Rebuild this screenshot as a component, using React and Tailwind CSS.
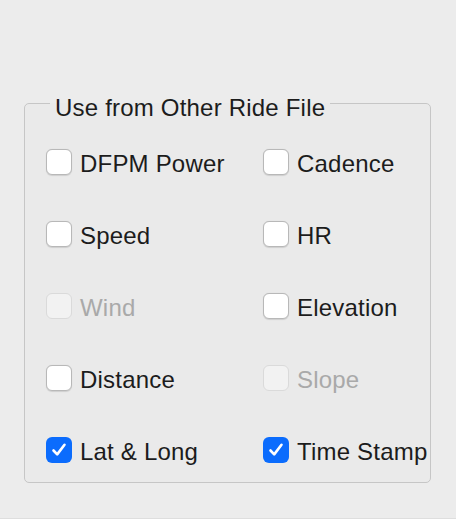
import React from "react";

const items = [
  { label: "DFPM Power", checked: false, disabled: false },
  { label: "Cadence", checked: false, disabled: false },
  { label: "Speed", checked: false, disabled: false },
  { label: "HR", checked: false, disabled: false },
  { label: "Wind", checked: false, disabled: true },
  { label: "Elevation", checked: false, disabled: false },
  { label: "Distance", checked: false, disabled: false },
  { label: "Slope", checked: false, disabled: true },
  { label: "Lat & Long", checked: true, disabled: false },
  { label: "Time Stamp", checked: true, disabled: false },
];

function CheckBox({ checked, disabled }) {
  if (checked) {
    return (
      <span className="flex h-[26px] w-[26px] shrink-0 items-center justify-center rounded-[6px] bg-[#0b6cfd]">
        <svg width="18" height="18" viewBox="0 0 18 18" fill="none">
          <path
            d="M3.5 9.5 L7.2 13.4 L14.5 3.8"
            stroke="white"
            strokeWidth="2.6"
            strokeLinecap="round"
            strokeLinejoin="round"
          />
        </svg>
      </span>
    );
  }
  if (disabled) {
    return (
      <span className="h-[26px] w-[26px] shrink-0 rounded-[6px] border border-[#dadada] bg-[#f2f2f2]" />
    );
  }
  return (
    <span className="h-[26px] w-[26px] shrink-0 rounded-[6px] border border-[#b8b8b8] bg-white shadow-[0_0.5px_1px_rgba(0,0,0,0.12)]" />
  );
}

function Option({ label, checked, disabled }) {
  return (
    <label className="flex h-[26px] items-center gap-[8px] whitespace-nowrap">
      <CheckBox checked={checked} disabled={disabled} />
      <span
        className={
          "pt-1 text-[24px] leading-[28px] tracking-[0.2px] " +
          (disabled ? "text-[#a9a9a9]" : "text-[#1c1c1c]")
        }
      >
        {label}
      </span>
    </label>
  );
}

export default function App() {
  return (
    <div
      className="flex h-[524px] w-[456px] flex-col bg-[#ececec]"
      style={{ fontFamily: '"Liberation Sans", Arial, sans-serif' }}
    >
      <div className="pl-[24px] pr-[25px] pt-[84px]">
        <fieldset className="m-0 rounded-[5px] border border-[#c6c6c6] bg-[#eaeaea] pb-[19px] pl-[21px] pr-0">
          <legend className="ml-[4px] px-[5px] pt-[10px] text-[24px] leading-[28px] tracking-[0.2px] text-[#1c1c1c]">
            Use from Other Ride File
          </legend>
          <div className="mt-[27px] grid grid-cols-[217px_1fr] gap-y-[46px]">
            {items.map((it) => (
              <Option key={it.label} {...it} />
            ))}
          </div>
        </fieldset>
      </div>
      <div className="flex-1" />
      <div className="h-[6px] border-t border-[#dedede] bg-white" />
    </div>
  );
}
